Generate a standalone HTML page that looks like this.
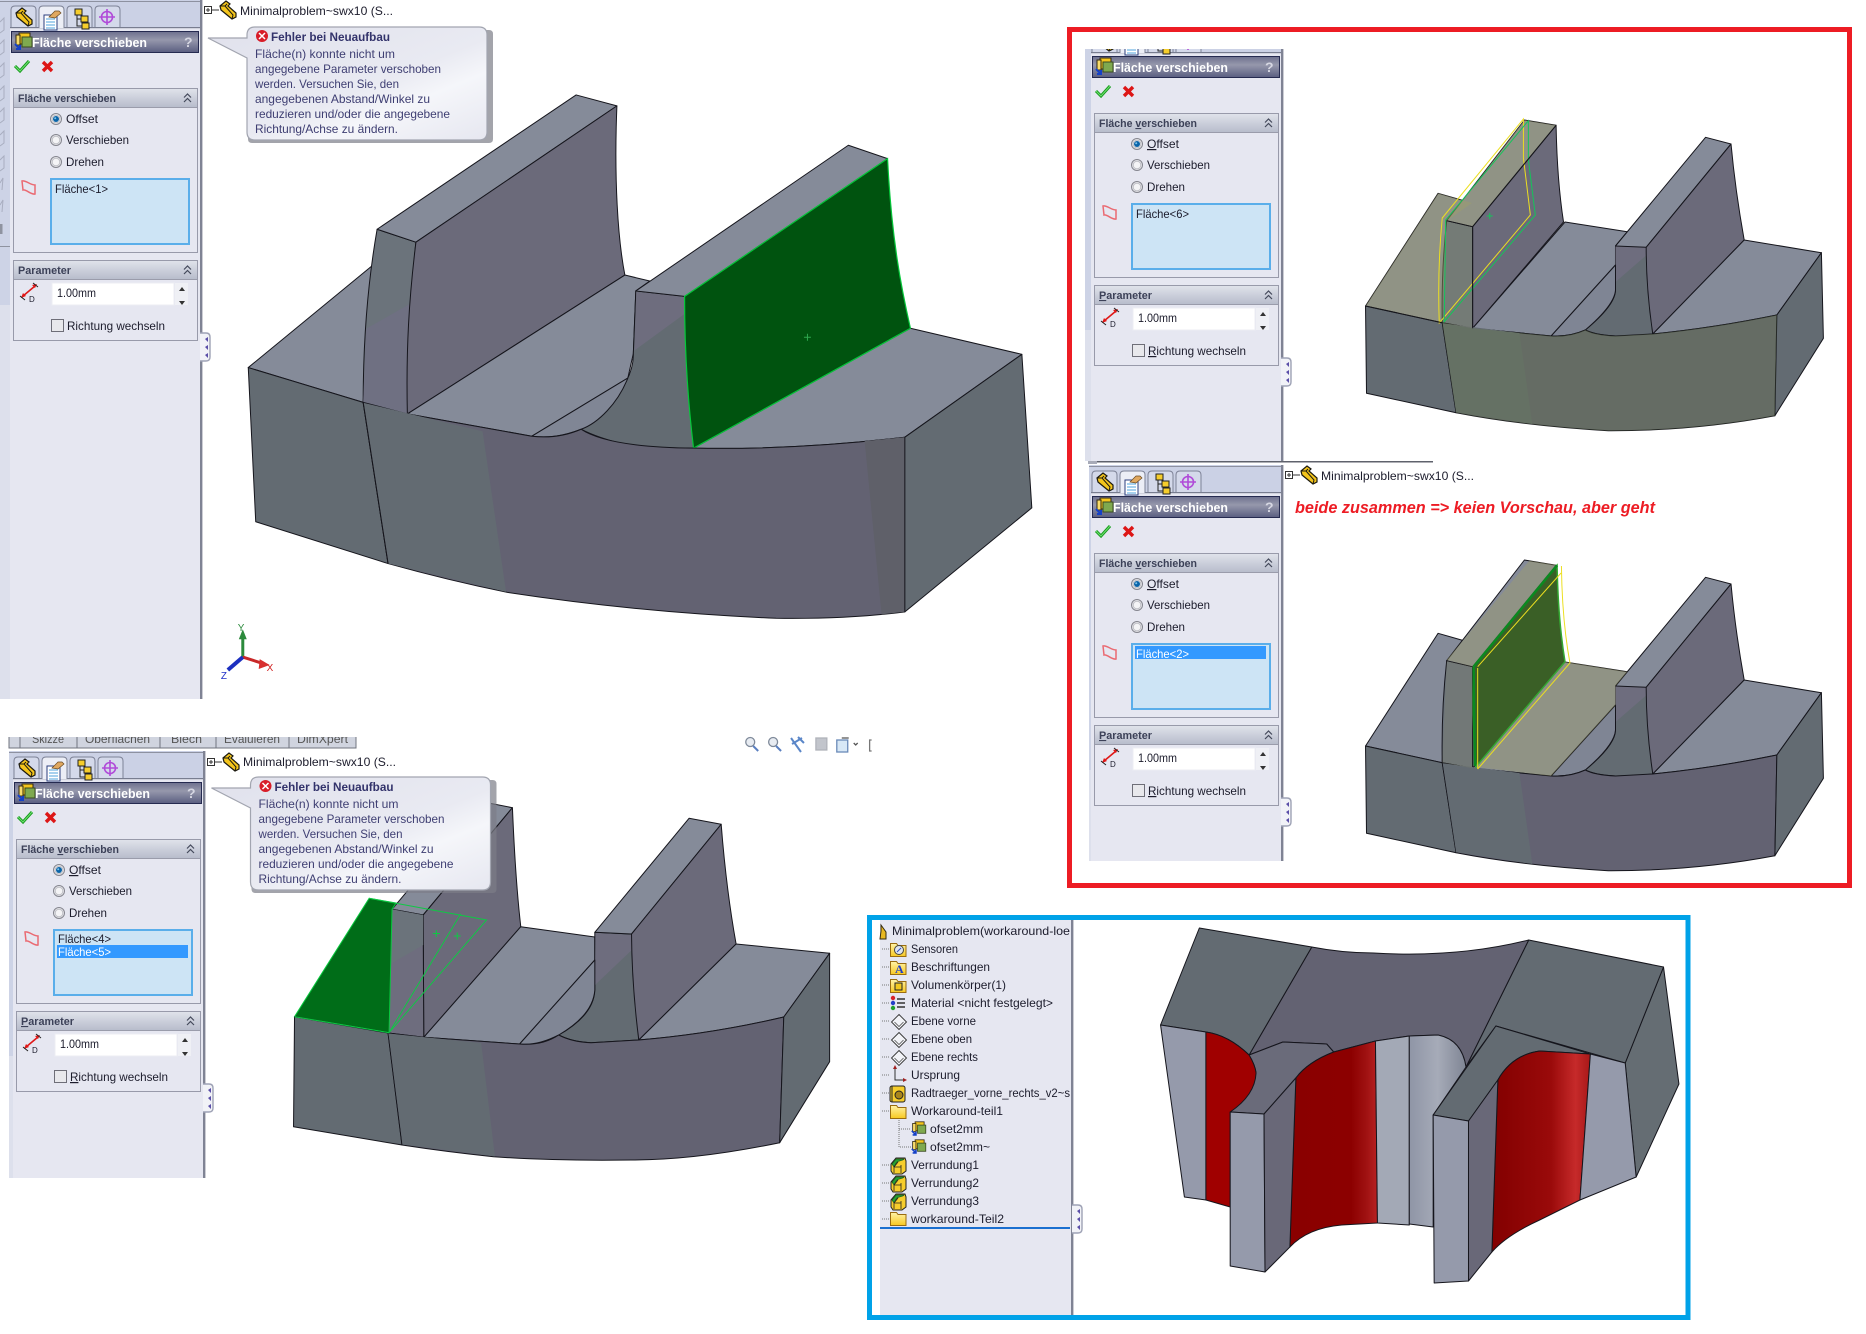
<!DOCTYPE html>
<html lang="de"><head><meta charset="utf-8"><title>Fläche verschieben</title>
<style>
html,body{margin:0;padding:0;background:#fff;width:1866px;height:1334px;overflow:hidden}
svg{display:block}
text{font-family:"Liberation Sans",sans-serif;font-size:12px;fill:#1c1c2c}
.tt{font-weight:bold;font-size:13px;fill:#fff}
.hd{font-weight:bold;font-size:11px;fill:#3c4158}
.cb{font-size:12px;fill:#3e3e72}
.ch{font-size:12px;font-weight:bold;fill:#33336b}
.w{fill:#fff}
.m{stroke:#15151c;stroke-width:1;stroke-linejoin:round}
</style></head><body>
<svg xmlns="http://www.w3.org/2000/svg" width="1866" height="1334" viewBox="0 0 1866 1334">
<defs>
<linearGradient id="gT" x1="0" y1="0" x2="0" y2="1"><stop offset="0" stop-color="#6d708e"/><stop offset=".4" stop-color="#9698ac"/><stop offset="1" stop-color="#5a5e80"/></linearGradient>
<linearGradient id="gH" x1="0" y1="0" x2="0" y2="1"><stop offset="0" stop-color="#dfe2ea"/><stop offset="1" stop-color="#b8bdcc"/></linearGradient>
<linearGradient id="gC" x1="0" y1="0" x2="1" y2="1"><stop offset="0" stop-color="#e0e1ec"/><stop offset=".55" stop-color="#e9eaf2"/><stop offset=".7" stop-color="#f5f6fa"/><stop offset="1" stop-color="#e6e7f0"/></linearGradient>
<linearGradient id="gR" x1="0" y1="0" x2="1" y2="0"><stop offset="0" stop-color="#8a0000"/><stop offset=".7" stop-color="#8c0000"/><stop offset=".88" stop-color="#a01212"/><stop offset="1" stop-color="#b82222"/></linearGradient>
<linearGradient id="gR2" x1="0" y1="0" x2="1" y2="0"><stop offset="0" stop-color="#820000"/><stop offset=".6" stop-color="#9a0a0a"/><stop offset=".85" stop-color="#c62a2a"/><stop offset="1" stop-color="#a81818"/></linearGradient>
<linearGradient id="gG" x1="0" y1="0" x2="1" y2="0"><stop offset="0" stop-color="#8f95a6"/><stop offset=".5" stop-color="#a6abb8"/><stop offset="1" stop-color="#7f8594"/></linearGradient>
<linearGradient id="gF" x1="0" y1="0" x2="0" y2="1"><stop offset="0" stop-color="#fff3a8"/><stop offset="1" stop-color="#f8c820"/></linearGradient>

<g id="part"><path d="M1 6 7 1 11 4 9 6 17 13V17L13 19 2 10Z" fill="#f4c51c" stroke="#1c1a10" stroke-width="1.200"/><path d="M1 6 6 6 14 15 13 19M6 6 8 4" fill="none" stroke="#1c1a10" stroke-width="1"/></g>
<g id="feat"><rect x="5" y="1" width="11" height="11" fill="#f4c51c" stroke="#332a10"/><rect x="8" y="5" width="10" height="10" fill="#7fa94f" stroke="#3a4a20"/><rect x="2" y="3" width="4" height="10" fill="#f8dc6a" stroke="#332a10"/><path d="M1 12 6 17M6 13V17H2" fill="none" stroke="#1440c8" stroke-width="2"/></g>
<g id="radio"><circle r="5.500" fill="#e6e6ea" stroke="#85868f"/><circle r="3.800" fill="#f4f4f6" stroke="#bfc0c6"/></g>
<g id="radioOn"><use href="#radio"/><circle r="3" fill="#0a64a8"/><circle cx="-.8" cy="-.8" r="1" fill="#7cc4ec"/></g>
<g id="chev"><path d="M-3.500 0 0 -3.500 3.500 0M-3.500 4.500 0 1 3.500 4.500" fill="none" stroke="#454a5c" stroke-width="1.200"/></g>
<g id="folder"><path d="M.5 3.500h6l1.500 2h8v11H.5Z" fill="url(#gF)" stroke="#9a6c10"/></g>
<g id="plane"><path d="M8 .5 15.500 8 8 15.500 .5 8Z" fill="#f2f3f7" stroke="#333" stroke-width=".9"/><path d="M3.500 8 8 12.500 12.500 8" fill="none" stroke="#555" stroke-width=".8"/></g>
<g id="fillet"><path d="M1 8 6 2H15L16 5V15L12 18H3L1 15Z" fill="#f6cd2c" stroke="#222"/><path d="M2 8 6 3H14C13 5 10 4 7 6 5 8 5 10 4 11Z" fill="#27a033" stroke="#1a5a20" stroke-width=".7"/><path d="M4 11 8 6M4 11V17M11 9V17M4 11H11" fill="none" stroke="#222" stroke-width=".8"/></g>
<g id="grip"><path d="M200 333h6q4 0 4 4v20q0 4 -4 4h-6" fill="#f1f2f7" stroke="#9ea2b5" stroke-width="1.400"/><path d="M205 339 208 337V342ZM205 347 208 345V350ZM205 355 208 353V358Z" fill="#5a4ea8"/></g>

<g id="base">
<rect x="0" y="0" width="10" height="305" fill="#cdd3e6"/>
<rect x="0" y="305" width="10" height="135" fill="#dde0ec"/>
<rect x="10" y="0" width="190" height="440" fill="#e6e7f1"/>
<rect x="10" y="0" width="190" height="27" fill="#cbd1e5"/>
<rect x="200" y="0" width="2.400" height="440" fill="#7f8394"/>
<rect x="0" y="1" width="200" height="1" fill="#8d91a0"/>
<rect x="10" y="27" width="190" height="1.200" fill="#787d90"/>
<path d="M11 27V10q0-4 4-4h17q4 0 4 4V27" fill="#d4d9ea" stroke="#7d8296"/>
<path d="M67 27V10q0-4 4-4h17q4 0 4 4V27" fill="#d4d9ea" stroke="#7d8296"/>
<path d="M95 27V10q0-4 4-4h17q4 0 4 4V27" fill="#d4d9ea" stroke="#7d8296"/>
<path d="M39 28V10q0-4 4-4h17q4 0 4 4V28" fill="#eceef6" stroke="#7d8296"/>
<use href="#part" x="15" y="7"/>
<g transform="translate(43,9)"><rect x="1" y="6" width="13" height="15" fill="#fff" stroke="#2b3f7d"/><path d="M3 10h9M3 13h9M3 16h9M3 19h9" stroke="#4fa3dc"/><path d="M6 8 12 2h4l2 2-6 5Z" fill="#e0a860" stroke="#6a4a20" stroke-width=".7"/></g>
<g transform="translate(72,8)" stroke="#222" fill="#f6cd2c"><rect x="3" y="1" width="7" height="6"/><rect x="9" y="8" width="7" height="6"/><rect x="10" y="15" width="7" height="6"/><path d="M5 7V18H10M5 11H9" fill="none"/></g>
<g transform="translate(107,17)" fill="none" stroke="#b04ad8" stroke-width="1.600"><circle r="5.500"/><path d="M-8 0H8M0 -8V8"/></g>
<rect x="11.500" y="31.500" width="187" height="21" fill="url(#gT)" stroke="#252a50"/>
<use href="#feat" x="14" y="32"/>
<path d="M15 66 20 71 29 61" fill="none" stroke="#159a1c" stroke-width="3"/>
<path d="M15 66 20 71 29 61" fill="none" stroke="#6fe06f" stroke-width="1"/>
<path d="M43 62 52 71M52 62 43 71" stroke="#dd1616" stroke-width="3.400"/>
<rect x="13.500" y="88.500" width="184" height="164" fill="#e6e7f1" stroke="#989aaa"/>
<rect x="14" y="89" width="183" height="18" fill="url(#gH)"/>
<rect x="14" y="107" width="183" height="1" fill="#9a9cab"/>
<use href="#chev" x="187.500" y="97.500"/>
<use href="#radio" x="56" y="140"/><use href="#radio" x="56" y="162"/><use href="#radioOn" x="56" y="119"/>
<path d="M22 181C26 180 30 185 35 185V194C31 195 26 189 23 190Z" fill="none" stroke="#ea6a72" stroke-width="1.500"/>
<rect x="51" y="179" width="138" height="65" fill="#cde4f5" stroke="#5aaeea" stroke-width="2"/>
<rect x="13.500" y="260.500" width="184" height="80" fill="#e6e7f1" stroke="#989aaa"/>
<rect x="14" y="261" width="183" height="18" fill="url(#gH)"/>
<rect x="14" y="279" width="183" height="1" fill="#9a9cab"/>
<use href="#chev" x="187.500" y="269.500"/>
<path d="M23 296 35 286" stroke="#e01818" stroke-width="1.600"/><path d="M21 298l2-5 3 3ZM37 284l-5 1 3 3Z" fill="#e01818"/><path d="M33 283l5 4M20 296l5 4" stroke="#222"/>
<rect x="52" y="283" width="122" height="22" fill="#fff" stroke="#eceef3"/>
<rect x="175" y="283" width="13" height="22" fill="#eff0f5"/>
<path d="M179 291h6l-3-4ZM179 301h6l-3 4Z" fill="#333"/>
<rect x="51.500" y="319.500" width="12" height="12" fill="#e8e8ec" stroke="#6e6e78"/>
<use href="#grip"/>
</g>

<g id="tree"><rect x="204.500" y="6.500" width="7" height="7" fill="#fff" stroke="#333"/><path d="M206 10h4M208 8v4M212 10h7" stroke="#333"/><use href="#part" x="219" y="0"/></g>
<g id="cal">
<path d="M249 30h237q4 0 4 4v105q0 4-4 4H249q-4 0-4-4V34q0-4 4-4Z" fill="#7c7e88" opacity=".7" transform="translate(3,0)"/>
<path d="M255 27H479q8 0 8 8V132q0 8-8 8H255q-8 0-8-8V58L208 38H247V35q0-8 8-8Z" fill="url(#gC)" stroke="#a2a5b0" stroke-width="1.200"/>
<circle cx="262" cy="36" r="6" fill="#d81c28"/><path d="M259 33 265 39M265 33 259 39" stroke="#fff" stroke-width="1.500"/>
</g>

<g id="m2">
<path class="m" fill="#858b99" d="M1368.500 306 1441.800 193.300 1476 203 1450.500 220.700 1446 322.700Z"/>
<path class="m" fill="#6a727a" d="M1450.500 220.700 1476.700 226.700 1476.700 328.300 1446 322.700Q1445 270 1450.500 220.700Z"/>
<path class="m" fill="#858b99" d="M1529 120 1561 125.300 1476.700 226.700 1450.500 220.700Z"/>
<path class="m" fill="#6b6a7a" d="M1561 125.300Q1562 180 1568.500 222L1476.700 328.300V226.700Z"/>
<path class="m" fill="#858b99" d="M1570 222 1633 231.700 1621 246V265L1556 336 1476.700 328.300Z"/>
<path class="m" fill="#636b72" d="M1621 246 1652 247.300 1658.700 334Q1640 336 1621 336 1600 335 1590.500 330 1621 305 1621 290Z"/>
<path fill="#6e6d7e" d="M1621 246 1652 247.300 1652.500 255 1621 282Z"/>
<path class="m" fill="#7f8594" d="M1621 265V290Q1620 305 1590.500 330 1575 337 1556 336Z"/>
<path class="m" fill="#858b99" d="M1712 137.300 1737.700 144 1652 247.300 1621 246Z"/>
<path class="m" fill="#6b6a7a" d="M1737.700 144Q1742 190 1751 240L1658.700 334Q1652 290 1652 247.300Z"/>
<path class="m" fill="#858b99" d="M1751 240 1829 252.700 1784 315Q1720 328 1658.700 334Z"/>
<path class="m" fill="#636b72" d="M1368.500 306 1446 322.700 1460 412.700 1369.500 393.300Z"/>
<path class="m" fill="#636272" d="M1446 322.700 1476.700 328.300 1556 336Q1575 337 1590.500 330 1600 335 1621 336L1658.700 334Q1720 328 1784 315L1782 415.700Q1700 431 1613.600 430.700 1530 426 1460 412.700Z"/>
<path fill="#636b72" d="M1446.500 323.200 1524 333 1537 424 1460 412.200Z"/>
<path class="m" fill="#636b72" d="M1784 315 1829 252.700 1831 338.300 1782 415.700Z"/>
</g>
<clipPath id="cA"><rect x="0" y="0" width="212" height="699"/></clipPath>
<clipPath id="cB"><rect x="4" y="24" width="208" height="412"/></clipPath>
<clipPath id="cC"><rect x="8" y="0" width="204" height="396"/></clipPath>
<clipPath id="cD"><rect x="6" y="-1" width="206" height="428"/></clipPath>
<clipPath id="cTabs"><rect x="0" y="737" width="400" height="14"/></clipPath>
</defs>

<rect width="1866" height="1334" fill="#fff"/>

<!-- Model A -->
<g transform="translate(200,80) scale(.995) translate(-200,-80)">
<path class="m" fill="#858b99" d="M248.500 369 373 266.700 364 404Z"/>
<path class="m" fill="#6b737b" d="M378 230 417 243Q408 330 408.400 415.600L364 404Q364 310 378 230Z"/>
<path fill="#6f7082" d="M367 330 411 305 408.400 415.600 364 404Z"/>
<path class="m" fill="#858b99" d="M578 95 619 106 417 243 378 230Z"/>
<path class="m" fill="#6b6a7a" d="M619 106C616 180 620 240 627 276L408.400 415.600C407 350 410 300 417 243Z"/>
<path class="m" fill="#858b99" d="M627 276 652 282 638 292 635.500 355 630 379.500 533.500 438 408.400 415.600Z"/>
<path class="m" fill="#636b72" d="M638 292 687 297.500 696 450C650 450 630 447 630 447Q600 440 583 431C615 410 636 380 635.500 355Z"/>
<path fill="#6e6d7e" d="M638.500 293 687 298V315L636.500 352Z"/>
<path class="m" fill="#808695" d="M630 379.500C620 405 600 425 583 431 565 438 550 440 533.500 438Z"/>
<path class="m" fill="#858b99" d="M851.600 145.600 891 159 687 297.500 638 292Z"/>
<path class="m" fill="#858b99" d="M914 329.500 1026 355.700 908.400 439Q800 452 696 450Z"/>
<path d="M687 297.500 891 159C895 240 905 290 914 329.500L696 450C690 400 687 350 687 297.500Z" fill="#00530f" stroke="#05c83a" stroke-width="1.200"/>
<path d="M807 338.500h7M810.500 335v7" stroke="#2fa84f"/>
<path class="m" fill="#636b72" d="M248.500 369 364 404 389 566 256 524Z"/>
<path class="m" fill="#636272" d="M364 404 408.400 415.600 533.500 438Q560 441 583 431 610 449 696 450 800 452 908.400 439V614.600Q850 622 779 621 640 615 509 595 450 583 389 566Z"/>
<path fill="#636b72" d="M364.500 404.500 484 433 507.600 594.500 389.500 566Z"/>
<path fill="#5f6069" d="M868 443 908 439V614.400L885 617Z"/>
<path class="m" fill="#636b72" d="M908.400 439 1026 355.700 1036 510 908.400 614.600Z"/>
<path d="M364 404 389 566" stroke="#15151c" fill="none"/>
<!-- triad -->
<g fill="none" stroke-width="3">
<path d="M243 660V638" stroke="#2c8a3c"/><path d="M243 660 265 667" stroke="#c82828"/><path d="M243 660 228 673" stroke="#1c30c0" stroke-width="4"/>
</g>
<path d="M239 642 243 632 247 642Z" fill="#2c8a3c"/><path d="M260 662 270 668 259 672Z" fill="#d83030"/>
<text x="238" y="634" style="font-size:10px;fill:#2c8a3c">Y</text>
<text x="267" y="674" style="font-size:10px;fill:#d02020">X</text>
<text x="221" y="682" style="font-size:10px;fill:#2030c8">Z</text>
</g>

<!-- Panel A -->
<g clip-path="url(#cA)">
<use href="#base"/>
<rect x="0" y="440" width="10" height="260" fill="#dde0ec"/>
<rect x="10" y="440" width="190" height="260" fill="#e6e7f1"/>
<rect x="200" y="440" width="2.400" height="260" fill="#7f8394"/>
<g fill="none" stroke="#a9aec0"><path d="M0 22 4 18V30L0 33M0 44 4 40V52L0 55M0 67 4 63V75L0 78M0 90 4 86V98L0 101M0 112 4 108V120L0 123M0 135 4 131V143L0 146M0 160 4 156V168L0 171M0 183 3 178 2 190M0 205 3 200 2 212"/></g>
<rect x="0" y="224" width="2.500" height="10" fill="#8f93a0"/><rect x="0" y="246" width="10" height="1" fill="#8f93a0"/>
<text class="tt" x="32" y="47" textLength="115" lengthAdjust="spacingAndGlyphs">Fläche verschieben</text>
<text class="tt" x="184" y="47" style="fill:#d6d7e2;font-size:14px">?</text>
<text class="hd" x="18" y="102" textLength="98" lengthAdjust="spacingAndGlyphs">Fläche verschieben</text>
<text x="66" y="123" textLength="32" lengthAdjust="spacingAndGlyphs">Offset</text>
<text x="66" y="144" textLength="63" lengthAdjust="spacingAndGlyphs">Verschieben</text>
<text x="66" y="166" textLength="38" lengthAdjust="spacingAndGlyphs">Drehen</text>
<text x="55" y="193" textLength="53" lengthAdjust="spacingAndGlyphs">Fläche&lt;1&gt;</text>
<text class="hd" x="18" y="274" textLength="53" lengthAdjust="spacingAndGlyphs">Parameter</text>
<text x="29" y="302" style="font-size:8px">D</text>
<text x="57" y="297" textLength="39" lengthAdjust="spacingAndGlyphs">1.00mm</text>
<text x="67" y="330" textLength="98" lengthAdjust="spacingAndGlyphs">Richtung wechseln</text>
</g>
<use href="#tree"/>
<text x="240" y="15" textLength="153" lengthAdjust="spacingAndGlyphs">Minimalproblem~swx10  (S...</text>
<use href="#cal"/>
<text class="ch" x="271" y="41" textLength="119" lengthAdjust="spacingAndGlyphs">Fehler bei Neuaufbau</text>
<text class="cb" x="255" y="58" textLength="140" lengthAdjust="spacingAndGlyphs">Fläche(n) konnte nicht um</text>
<text class="cb" x="255" y="73" textLength="186" lengthAdjust="spacingAndGlyphs">angegebene Parameter verschoben</text>
<text class="cb" x="255" y="88" textLength="144" lengthAdjust="spacingAndGlyphs">werden. Versuchen Sie, den</text>
<text class="cb" x="255" y="103" textLength="175" lengthAdjust="spacingAndGlyphs">angegebenen Abstand/Winkel zu</text>
<text class="cb" x="255" y="118" textLength="195" lengthAdjust="spacingAndGlyphs">reduzieren und/oder die angegebene</text>
<text class="cb" x="255" y="133" textLength="143" lengthAdjust="spacingAndGlyphs">Richtung/Achse zu ändern.</text>

<!-- Red frame -->
<rect x="1069.500" y="29.500" width="780" height="856" fill="none" stroke="#ed1c24" stroke-width="5"/>

<!-- Model B -->
<g transform="translate(1070,0) scale(.99,1) translate(-1070,0)">
<use href="#m2"/>
<g fill="#a0a06a" fill-opacity=".42">
<path d="M1368.500 306 1441.800 193.300 1476 203 1450.500 220.700 1446 322.700Z"/>
<path d="M1529 120 1561 125.300 1476.700 226.700 1450.500 220.700Z"/>
<path d="M1450.500 220.700 1476.700 226.700 1476.700 328.300 1446 322.700Z" fill-opacity=".2"/>
</g>
<path fill="#6a7a50" fill-opacity=".42" d="M1446 322.700 1476.700 328.300 1556 336Q1575 337 1590.500 330 1600 335 1621 336L1658.700 334Q1720 328 1784 315L1782 415.700Q1700 431 1613.600 430.700 1530 426 1460 412.700Z"/>
<path d="M1528 119 1446 218Q1441 270 1443 323L1535 215 1528 158Z" fill="none" stroke="#ecdf20"/>
<path d="M1533 120.700 1449.500 220 1448 321.700 1540 215 1533 160Z" fill="none" stroke="#14c45a"/>
<path d="M1491 216h6M1494 213v6" stroke="#14c45a"/>
<path d="M1368.500 306 1446 322.700M1476.700 328.300 1476.700 226.700M1450.500 220.700 1476.700 226.700 1561 125.300" fill="none" stroke="#15151c"/>
</g>

<!-- Panel B -->
<g transform="translate(1081,25)" clip-path="url(#cB)">
<use href="#base"/>
<text class="tt" x="32" y="47" textLength="115" lengthAdjust="spacingAndGlyphs">Fläche verschieben</text>
<text class="tt" x="184" y="47" style="fill:#d6d7e2;font-size:14px">?</text>
<text class="hd" x="18" y="102" textLength="98" lengthAdjust="spacingAndGlyphs">Fläche <tspan text-decoration="underline">v</tspan>erschieben</text>
<text x="66" y="123" textLength="32" lengthAdjust="spacingAndGlyphs"><tspan text-decoration="underline">O</tspan>ffset</text>
<text x="66" y="144" textLength="63" lengthAdjust="spacingAndGlyphs">Verschieben</text>
<text x="66" y="166" textLength="38" lengthAdjust="spacingAndGlyphs">Drehen</text>
<text x="55" y="193" textLength="53" lengthAdjust="spacingAndGlyphs">Fläche&lt;6&gt;</text>
<text class="hd" x="18" y="274" textLength="53" lengthAdjust="spacingAndGlyphs"><tspan text-decoration="underline">P</tspan>arameter</text>
<text x="29" y="302" style="font-size:8px">D</text>
<text x="57" y="297" textLength="39" lengthAdjust="spacingAndGlyphs">1.00mm</text>
<text x="67" y="330" textLength="98" lengthAdjust="spacingAndGlyphs"><tspan text-decoration="underline">R</tspan>ichtung wechseln</text>
</g>
<rect x="1097" y="461" width="336" height="1.500" fill="#5f626c"/>
<rect x="1088" y="461" width="9" height="3" fill="#a8abb8"/>

<!-- Model C -->
<g transform="translate(1070,0) scale(.99,1) translate(-1070,0)">
<use href="#m2" y="440"/>
<path d="M1534 560.700 1562 565 1477.700 666.700 1450.500 660Z" fill="#a0a06a" fill-opacity=".42"/>
<path d="M1450.500 660.700 1476.700 666.700V768.300L1446 762.700Z" fill="#a0a06a" fill-opacity=".14"/>
<path d="M1570 661.700 1633 671.700 1621 686V705L1556 776 1480 767Z" fill="#a0a06a" fill-opacity=".42"/>
<path d="M1477.700 666.700 1562 565.300Q1563 620 1570 661.700L1480 766.700Q1476 720 1477.700 666.700Z" fill="#3a5f26" stroke="#34a832" stroke-width="1.500"/>
<path d="M1477.700 666.700 1562 565.300M1477.700 666.700 1479 766" fill="none" stroke="#0a8a20" stroke-width="2.500"/>
<path d="M1481.800 769 1575 663Q1567 620 1566.400 566M1481.800 666.700 1566 573M1481.800 668V769" fill="none" stroke="#ecdf20"/>
</g>

<!-- Panel C -->
<g transform="translate(1081,465)" clip-path="url(#cC)">
<use href="#base"/>
<rect x="54" y="181" width="131" height="13" fill="#3399ff"/>
<text class="tt" x="32" y="47" textLength="115" lengthAdjust="spacingAndGlyphs">Fläche verschieben</text>
<text class="tt" x="184" y="47" style="fill:#d6d7e2;font-size:14px">?</text>
<text class="hd" x="18" y="102" textLength="98" lengthAdjust="spacingAndGlyphs">Fläche <tspan text-decoration="underline">v</tspan>erschieben</text>
<text x="66" y="123" textLength="32" lengthAdjust="spacingAndGlyphs"><tspan text-decoration="underline">O</tspan>ffset</text>
<text x="66" y="144" textLength="63" lengthAdjust="spacingAndGlyphs">Verschieben</text>
<text x="66" y="166" textLength="38" lengthAdjust="spacingAndGlyphs">Drehen</text>
<text class="w" x="55" y="193" textLength="53" lengthAdjust="spacingAndGlyphs">Fläche&lt;2&gt;</text>
<text class="hd" x="18" y="274" textLength="53" lengthAdjust="spacingAndGlyphs"><tspan text-decoration="underline">P</tspan>arameter</text>
<text x="29" y="302" style="font-size:8px">D</text>
<text x="57" y="297" textLength="39" lengthAdjust="spacingAndGlyphs">1.00mm</text>
<text x="67" y="330" textLength="98" lengthAdjust="spacingAndGlyphs"><tspan text-decoration="underline">R</tspan>ichtung wechseln</text>
</g>
<use href="#tree" transform="translate(1081,465)"/>
<text x="1321" y="480" textLength="153" lengthAdjust="spacingAndGlyphs">Minimalproblem~swx10  (S...</text>
<text x="1295" y="513" textLength="360" lengthAdjust="spacingAndGlyphs" style="font-size:17px;font-weight:bold;font-style:italic;fill:#ed1c24">beide zusammen =&gt; keien Vorschau, aber geht</text>

<!-- Model D -->
<g transform="scale(.995,1)">
<path class="m" fill="#858b99" d="M394 909.300 425.300 915 515 807.700 484.700 801.700Z"/>
<path class="m" fill="#6b6a7a" d="M515 807.700Q518 880 523.400 926.700L425.900 1037.300 425.300 915Z"/>
<path class="m" fill="#858b99" d="M523.400 926.700 597.800 937 597.800 960 522.200 1044 425.900 1037.300Z"/>
<path class="m" fill="#6e6d7e" d="M394 909.300 425.300 915 425.900 1037.300 390 1033Q390 960 394 909.300Z"/>
<path fill="#6b737b" d="M394 909.300 425.300 915V945L391 965Z"/>
<path class="m" fill="#636b72" d="M597.800 932.300 634.700 934 642 1040 594 1042.700Q575 1042 561.500 1035 597 1015 597.800 990Z"/>
<path fill="#6e6d7e" d="M598.500 933 634.700 935 635 950 598 985Z"/>
<path class="m" fill="#808695" d="M597.800 960V990Q596 1015 561.500 1035 540 1046 522.200 1044Z"/>
<path class="m" fill="#858b99" d="M692.500 818.300 724.800 824.300 634.700 934 597.800 932.300Z"/>
<path class="m" fill="#6b6a7a" d="M724.800 824.300Q730 890 739.800 944L642 1040Q635 985 634.700 934Z"/>
<path class="m" fill="#858b99" d="M739.800 944 833.800 953.300 787.700 1017Q715 1034 642 1040Z"/>
<path d="M296 1016.700 371 898.300 398 903 394 909.300 391 1032.700Z" fill="#006d18" stroke="#06c83c"/>
<path class="m" fill="#636b72" d="M296 1016.700 390 1033 404 1145 295 1126.700Z"/>
<path class="m" fill="#636272" d="M390 1033 425.900 1037.300 522.200 1044Q545 1046 561.500 1035 575 1042 594 1042.700L642 1040Q715 1034 787.700 1017L783.600 1142.700Q700 1160 635 1160 554 1161 496 1156.700 450 1152 404 1145Z"/>
<path fill="#636b72" d="M390.500 1033.500 483.600 1043 497.400 1156.400 404.500 1144.500Z"/>
<path class="m" fill="#636b72" d="M787.700 1017 833.800 953.300V1061.700L783.600 1142.700Z"/>
<path d="M296 1016.700 391 1032.700M371 898.300 489 920 391 1032.700 463 914" fill="none" stroke="#0fc845"/>
<path d="M435 933.500h7M438.500 930v7M456 936h7M459.500 932.500v7" stroke="#0fc845"/>
</g>

<!-- Tabs row above panel D -->
<g clip-path="url(#cTabs)">
<rect x="9" y="730" width="347" height="18" fill="#d0d4df" stroke="#70747f"/>
<path d="M20 730V748M77 730V748M160 730V748M216 730V748M289 730V748" stroke="#70747f"/>
<text x="32" y="743" textLength="32" lengthAdjust="spacingAndGlyphs" style="fill:#555">Skizze</text>
<text x="85" y="743" textLength="65" lengthAdjust="spacingAndGlyphs" style="fill:#555">Oberflächen</text>
<text x="171" y="743" textLength="31" lengthAdjust="spacingAndGlyphs" style="fill:#555">Blech</text>
<text x="224" y="743" textLength="56" lengthAdjust="spacingAndGlyphs" style="fill:#555">Evaluieren</text>
<text x="297" y="743" textLength="51" lengthAdjust="spacingAndGlyphs" style="fill:#555">DimXpert</text>
</g>
<!-- toolbar icons -->
<g fill="none" stroke="#7f8a9a" stroke-width="1.300" transform="scale(.995,1)">
<circle cx="754" cy="742" r="4.500" fill="#e8ecf2"/><path d="M757 746 762 751" stroke="#5a7fc0" stroke-width="2"/>
<circle cx="777" cy="742" r="4.500" fill="#e8ecf2"/><path d="M780 746 785 751" stroke="#5a7fc0" stroke-width="2"/>
<path d="M795 738 805 752M802 737 808 743M796 744 806 738" stroke="#5a86c8" stroke-width="2"/>
<rect x="820" y="738" width="11" height="12" fill="#c2c5cc" stroke="#b0b3ba"/>
<rect x="841" y="740" width="11" height="12" fill="#d8e8f6" stroke="#6a8ab8"/><path d="M846 738 853 738M858 743l2 2 2-2" stroke="#555"/>
<path d="M876 740H874V751H876" stroke="#777"/>
</g>

<!-- Panel D -->
<g transform="translate(3,751)" clip-path="url(#cD)">
<use href="#base"/>
<rect x="54" y="194" width="131" height="13" fill="#3399ff"/>
<text class="tt" x="32" y="47" textLength="115" lengthAdjust="spacingAndGlyphs">Fläche verschieben</text>
<text class="tt" x="184" y="47" style="fill:#d6d7e2;font-size:14px">?</text>
<text class="hd" x="18" y="102" textLength="98" lengthAdjust="spacingAndGlyphs">Fläche <tspan text-decoration="underline">v</tspan>erschieben</text>
<text x="66" y="123" textLength="32" lengthAdjust="spacingAndGlyphs"><tspan text-decoration="underline">O</tspan>ffset</text>
<text x="66" y="144" textLength="63" lengthAdjust="spacingAndGlyphs">Verschieben</text>
<text x="66" y="166" textLength="38" lengthAdjust="spacingAndGlyphs">Drehen</text>
<text x="55" y="192" textLength="53" lengthAdjust="spacingAndGlyphs">Fläche&lt;4&gt;</text>
<text class="w" x="55" y="205" textLength="53" lengthAdjust="spacingAndGlyphs">Fläche&lt;5&gt;</text>
<text class="hd" x="18" y="274" textLength="53" lengthAdjust="spacingAndGlyphs"><tspan text-decoration="underline">P</tspan>arameter</text>
<text x="29" y="302" style="font-size:8px">D</text>
<text x="57" y="297" textLength="39" lengthAdjust="spacingAndGlyphs">1.00mm</text>
<text x="67" y="330" textLength="98" lengthAdjust="spacingAndGlyphs"><tspan text-decoration="underline">R</tspan>ichtung wechseln</text>
</g>
<use href="#tree" transform="translate(3,752)"/>
<text x="243" y="766" textLength="153" lengthAdjust="spacingAndGlyphs">Minimalproblem~swx10  (S...</text>
<g transform="translate(3.500,750)">
<use href="#cal"/>
<text class="ch" x="271" y="41" textLength="119" lengthAdjust="spacingAndGlyphs">Fehler bei Neuaufbau</text>
<text class="cb" x="255" y="58" textLength="140" lengthAdjust="spacingAndGlyphs">Fläche(n) konnte nicht um</text>
<text class="cb" x="255" y="73" textLength="186" lengthAdjust="spacingAndGlyphs">angegebene Parameter verschoben</text>
<text class="cb" x="255" y="88" textLength="144" lengthAdjust="spacingAndGlyphs">werden. Versuchen Sie, den</text>
<text class="cb" x="255" y="103" textLength="175" lengthAdjust="spacingAndGlyphs">angegebenen Abstand/Winkel zu</text>
<text class="cb" x="255" y="118" textLength="195" lengthAdjust="spacingAndGlyphs">reduzieren und/oder die angegebene</text>
<text class="cb" x="255" y="133" textLength="143" lengthAdjust="spacingAndGlyphs">Richtung/Achse zu ändern.</text>
</g>

<!-- Blue frame -->
<rect x="869.500" y="917.500" width="818.500" height="400" fill="none" stroke="#00a2e8" stroke-width="5"/>
<rect x="880" y="920" width="191" height="395" fill="#e6e7f1"/>
<rect x="1071" y="920" width="2.400" height="395" fill="#7f8394"/>
<!-- tree -->
<path d="M881 925 886 932V939H880L881 931Z" fill="#e8b820" stroke="#332a10"/>
<g stroke="#777" stroke-dasharray="1 1" fill="none"><path d="M882 949H890M882 967H890M882 985H890M882 1003H890M882 1021H890M882 1039H890M882 1057H890M882 1075H890M882 1093H890M882 1111H890M882 1165H890M882 1183H890M882 1201H890M882 1219H890M899 1120V1147H911M899 1129H911"/></g>
<use href="#folder" x="890" y="940"/><circle cx="899" cy="950" r="4.500" fill="#dfe4ee" stroke="#444"/><path d="M897 952 901 948" stroke="#3050c0"/>
<use href="#folder" x="890" y="958"/><text x="895" y="973" style="font-size:12px;font-weight:bold;fill:#1c3cc8;font-family:'Liberation Serif',serif">A</text>
<use href="#folder" x="890" y="976"/><rect x="895" y="983" width="7" height="7" fill="#f2c820" stroke="#222"/>
<circle cx="893" cy="998" r="2.200" fill="#d8242a"/><circle cx="893" cy="1003" r="2.200" fill="#2440c8"/><circle cx="893" cy="1008" r="2.200" fill="#20a030"/><path d="M897 999H905M897 1003H905M897 1007H905" stroke="#333" stroke-width="1.500"/>
<use href="#plane" x="891" y="1014"/><use href="#plane" x="891" y="1032"/><use href="#plane" x="891" y="1050"/>
<path d="M895 1067V1080H905" fill="none" stroke="#333"/><path d="M893 1069 895 1065 897 1069ZM903 1078 907 1080 903 1082Z" fill="#a02020"/>
<rect x="890" y="1086" width="15" height="16" rx="2" fill="#f6cd2c" stroke="#222"/><circle cx="899" cy="1095" r="4" fill="#a8851c" stroke="#222"/><path d="M892 1086V1102" stroke="#222"/>
<use href="#folder" x="890" y="1102"/>
<g transform="translate(911,1121) scale(.82)"><use href="#feat"/></g><g transform="translate(911,1139) scale(.82)"><use href="#feat"/></g>
<use href="#fillet" x="890" y="1156"/><use href="#fillet" x="890" y="1174"/><use href="#fillet" x="890" y="1192"/>
<use href="#folder" x="890" y="1209"/>
<rect x="880" y="1227" width="190" height="2" fill="#1a6fd0"/>
<g transform="translate(872,872)"><use href="#grip"/></g>
<text x="892" y="935" textLength="178" lengthAdjust="spacingAndGlyphs">Minimalproblem(workaround-loe</text>
<text x="911" y="953" textLength="47" lengthAdjust="spacingAndGlyphs">Sensoren</text>
<text x="911" y="971" textLength="79" lengthAdjust="spacingAndGlyphs">Beschriftungen</text>
<text x="911" y="989" textLength="95" lengthAdjust="spacingAndGlyphs">Volumenkörper(1)</text>
<text x="911" y="1007" textLength="142" lengthAdjust="spacingAndGlyphs">Material &lt;nicht festgelegt&gt;</text>
<text x="911" y="1025" textLength="65" lengthAdjust="spacingAndGlyphs">Ebene vorne</text>
<text x="911" y="1043" textLength="61" lengthAdjust="spacingAndGlyphs">Ebene oben</text>
<text x="911" y="1061" textLength="67" lengthAdjust="spacingAndGlyphs">Ebene rechts</text>
<text x="911" y="1079" textLength="49" lengthAdjust="spacingAndGlyphs">Ursprung</text>
<text x="911" y="1097" textLength="159" lengthAdjust="spacingAndGlyphs">Radtraeger_vorne_rechts_v2~s</text>
<text x="911" y="1115" textLength="92" lengthAdjust="spacingAndGlyphs">Workaround-teil1</text>
<text x="930" y="1133" textLength="53" lengthAdjust="spacingAndGlyphs">ofset2mm</text>
<text x="930" y="1151" textLength="60" lengthAdjust="spacingAndGlyphs">ofset2mm~</text>
<text x="911" y="1169" textLength="68" lengthAdjust="spacingAndGlyphs">Verrundung1</text>
<text x="911" y="1187" textLength="68" lengthAdjust="spacingAndGlyphs">Verrundung2</text>
<text x="911" y="1205" textLength="68" lengthAdjust="spacingAndGlyphs">Verrundung3</text>
<text x="911" y="1223" textLength="93" lengthAdjust="spacingAndGlyphs">workaround-Teil2</text>

<!-- Model E -->
<g transform="translate(870,0) scale(.995,1) translate(-870,0)">
<path class="m" fill="#656d73" d="M1667.500 967 1683 1084 1640 1177 1629 1063Z"/>
<path class="m" fill="#636b72" d="M1532 940 1667.500 967 1629 1063 1499 1026 1469 1067Z"/>
<path class="m" fill="#636272" d="M1314 947Q1345 953 1376 953 1460 958 1532 940L1469 1067 1441 1035 1412 1036 1378 1041 1336 1052 1329 1044 1285 1042 1251 1055Z"/>
<path class="m" fill="#636b72" d="M1162 1025 1201 928 1314 947 1251 1055Q1230 1035 1207.600 1032Z"/>
<path class="m" fill="#6a6b7a" d="M1251 1055 1285 1042 1329 1044 1336 1052Q1310 1062 1298 1078L1266 1114 1232 1112Q1250 1095 1258 1073 1257 1065 1251 1055Z"/>
<path class="m" fill="#959aab" d="M1162 1025 1207.600 1032V1200L1186 1197Z"/>
<path class="m" fill="#a00000" d="M1207.600 1032Q1230 1035 1251 1055 1257 1065 1258 1073 1257 1095 1232 1112V1207L1207.600 1200Z"/>
<path class="m" fill="url(#gR)" d="M1298 1078Q1310 1062 1336 1052L1378 1041 1380 1223 1344 1225Q1310 1228 1292 1247Z"/>
<path class="m" fill="#a3a9b6" d="M1378 1041 1412 1036V1225L1380 1223Z"/>
<path class="m" fill="url(#gG)" d="M1412 1036 1441 1035Q1465 1040 1469 1067L1436 1115V1227L1412 1224Z"/>
<path class="m" fill="#636b72" d="M1436 1115 1499 1026 1594 1054 1543 1051Q1515 1055 1501 1080L1471.500 1121Z"/>
<path class="m" fill="url(#gR2)" d="M1501 1080Q1515 1055 1543 1051L1594 1054 1583.500 1200 1543 1220Q1510 1235 1495 1252Z"/>
<path class="m" fill="#959aab" d="M1594 1054 1629 1063 1640 1177 1583.500 1200Z"/>
<path class="m" fill="#959aab" d="M1232 1112 1266 1114 1267 1272 1232 1266Z"/>
<path class="m" fill="#696878" d="M1266 1114 1298 1078 1292 1247 1267 1272Z"/>
<path class="m" fill="#959aab" d="M1436 1115 1471.500 1121V1281L1437 1283Z"/>
<path class="m" fill="#696878" d="M1471.500 1121 1501 1080 1495 1252 1471.500 1281Z"/>
</g>
</svg>
</body></html>
